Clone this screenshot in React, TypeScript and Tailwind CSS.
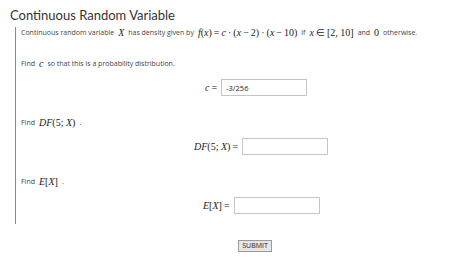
import React from "react";

const M = ({ children }: { children: React.ReactNode }) => (
  <span className="mx-[4px] font-['Liberation_Serif',serif] text-[10px] leading-[12px] text-[#222]">{children}</span>
);

const I = ({ children }: { children: React.ReactNode }) => <i>{children}</i>;

const Answer = ({ label, value, pad }: { label: React.ReactNode; value?: string; pad: string }) => (
  <div className={`mt-[9px] flex h-[17px] items-center ${pad}`}>
    <span className="mr-[4px] font-['Liberation_Serif',serif] text-[10px] text-[#222]">{label}</span>
    <input
      readOnly
      value={value ?? ""}
      className="h-[17px] w-[86px] border border-[#c4c4c4] bg-white px-[4px] font-['Open_Sans',sans-serif] text-[7.5px] text-[#222] outline-none"
    />
  </div>
);

export default function App() {
  return (
    <div className="h-[257px] w-[474px] overflow-hidden bg-white pl-[10px] pt-[5px] font-['Open_Sans',sans-serif] text-[#444]">
      <h1 className="h-[22px] font-['Lato',sans-serif] text-[13px] font-normal leading-[20px] text-[#333]">
        Continuous Random Variable
      </h1>
      <div className="ml-[5px] border-l border-[#8a8a8a] pb-[10px] pl-[5px] text-[7px] leading-[12px]">
        <div className="flex h-[12px] items-center whitespace-nowrap">
          Continuous random variable
          <M>
            <I>X</I>
          </M>
          has density given by
          <M>
            <I>f</I>(<I>x</I>){"\u2009"}={"\u2009"}<I>c</I>{"\u2009"}·{"\u2009"}(<I>x</I>{"\u2009"}−{"\u2009"}2){"\u2009"}·{"\u2009"}(<I>x</I>{"\u2009"}−{"\u2009"}10)
          </M>
          if
          <M>
            <I>x</I>{"\u2009"}∈{"\u2009"}[2, 10]
          </M>
          and
          <M>0</M>
          otherwise.
        </div>

        <div className="mt-[19px] flex h-[12px] items-center">
          Find
          <M>
            <I>c</I>
          </M>
          so that this is a probability distribution.
        </div>
        <Answer
          pad="pl-[184px]"
          label={
            <>
              <I>c</I>{"\u2009"}=
            </>
          }
          value="-3/256"
        />

        <div className="mt-[21px] flex h-[12px] items-center">
          Find
          <M>
            <I>DF</I>(5; <I>X</I>)
          </M>
          .
        </div>
        <Answer
          pad="pl-[173px]"
          label={
            <>
              <I>DF</I>(5; <I>X</I>){"\u2009"}=
            </>
          }
        />

        <div className="mt-[21px] flex h-[12px] items-center">
          Find
          <M>
            <I>E</I>[<I>X</I>]
          </M>
          .
        </div>
        <Answer
          pad="pl-[182px]"
          label={
            <>
              <I>E</I>[<I>X</I>]{"\u2009"}=
            </>
          }
        />
      </div>
      <div className="mt-[16px] flex pl-[228px]">
        <button className="h-[12px] w-[34px] border border-[#9a9a9a] bg-[#e6e6e6] p-0 text-[7px] leading-[10px] text-[#222]">
          SUBMIT
        </button>
      </div>
    </div>
  );
}
